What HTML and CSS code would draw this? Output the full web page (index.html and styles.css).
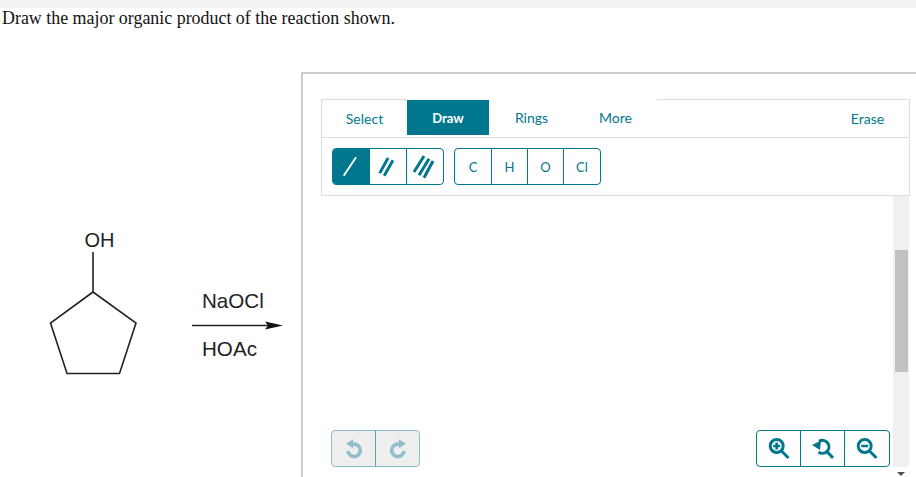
FILE: index.html
```html
<!DOCTYPE html>
<html lang="en">
<head>
    <meta charset="UTF-8">
    <title>Draw the major organic product</title>
    <link rel="stylesheet" href="styles.css">
</head>
<body>
    <div class="top-strip"></div>
    <p class="question">Draw the major organic product of the reaction shown.</p>

    <div class="stage">
        <!-- viewBox starts at the stage top so the numbers read as page coordinates -->
        <svg class="reaction" viewBox="0 72 301 405" width="301" height="405">
            <text class="chem-label" x="84.5" y="247">OH</text>
            <path class="bond" d="M93 252V292L136 323 119.5 373.5H67L50.5 323 93 292"/>
            <path class="bond" d="M192 325.5H268"/>
            <path class="arrow-head" d="M265 321.5L283 325.5 265 329.5 268 325.5z"/>
            <text class="chem-label reagent" x="202" y="308">NaOCl</text>
            <text class="chem-label reagent" x="202" y="356">HOAc</text>
        </svg>

        <div class="frame">
            <div class="editor">
                <div class="tabs">
                    <button class="tab tab-select">Select</button>
                    <button class="tab tab-draw active">Draw</button>
                    <button class="tab tab-rings">Rings</button>
                    <button class="tab tab-more">More</button>
                    <div class="tab-spacer"><button class="tab tab-erase">Erase</button></div>
                </div>

                <div class="tool-row">
                    <div class="btn-group">
                        <button class="tool active">
                            <svg viewBox="0 0 37 35" width="37" height="35"><path class="bond-white" d="M11 27L23.7 8"/></svg>
                        </button>
                        <button class="tool">
                            <svg viewBox="0 0 37 35" width="37" height="35"><path class="bond-teal" d="M10 24.3L18.6 8.7M14.6 27L23.6 11"/></svg>
                        </button>
                        <button class="tool">
                            <svg viewBox="0 0 36 35" width="36" height="35"><path class="bond-teal" d="M7 23L17 7M12 26.3L22 9.7M17 28.7L26 12"/></svg>
                        </button>
                    </div>
                    <div class="btn-group atoms">
                        <button class="tool">C</button>
                        <button class="tool">H</button>
                        <button class="tool">O</button>
                        <button class="tool">Cl</button>
                    </div>
                </div>
            </div>

            <div class="canvas">
                <div class="canvas-controls">
                    <div class="btn-group history">
                        <button class="tool wide">
                            <svg viewBox="0 0 18 20" width="18" height="20"><path class="history-ring" d="M7 5.5A6.2 6.2 0 1 1 3 12"/><path class="history-head" d="M1 4.5L8 0.5V9.5z"/></svg>
                        </button>
                        <button class="tool wide">
                            <svg class="flip" viewBox="0 0 18 20" width="18" height="20"><path class="history-ring" d="M7 5.5A6.2 6.2 0 1 1 3 12"/><path class="history-head" d="M1 4.5L8 0.5V9.5z"/></svg>
                        </button>
                    </div>
                    <div class="btn-group">
                        <button class="tool wide">
                            <svg viewBox="0 0 22 22" width="22" height="22"><circle class="lens" cx="8.7" cy="8" r="6.5"/><path class="lens" d="M13.5 13L20.5 20"/><path class="lens-thin" d="M8.7 4.5v7M5.2 8h7"/></svg>
                        </button>
                        <button class="tool wide">
                            <svg viewBox="0 0 22 22" width="22" height="22"><path class="lens" d="M7 3.3A6.5 6.5 0 1 1 6.5 14"/><path class="lens" d="M15 13.5L21 20"/><path class="lens-head" d="M0 7L9 2.5 8 12z"/></svg>
                        </button>
                        <button class="tool wide">
                            <svg viewBox="0 0 22 22" width="22" height="22"><circle class="lens" cx="8.7" cy="8" r="6.5"/><path class="lens" d="M13.5 13L20.5 20"/><path class="lens-thin" d="M5.2 8h7"/></svg>
                        </button>
                    </div>
                </div>
                <div class="scrollbar">
                    <div class="scroll-thumb"></div>
                    <div class="scroll-arrow"></div>
                </div>
            </div>
        </div>
    </div>
</body>
</html>
```

FILE: styles.css
```css
/* Base Styles */
body {
    margin: 0;
    height: 477px;
    overflow: hidden;
    background: #fff;
    font-family: 'Lato', 'Noto Sans', sans-serif;
}

button {
    padding: 0;
    border: none;
    background: none;
    font: inherit;
    color: inherit;
}

.top-strip {
    height: 8px;
    background: #f2f2f2;
}

.question {
    margin: 0;
    height: 64px;
    padding-left: 2px;
    font-family: 'Liberation Serif', serif;
    font-size: 17.92px;
    line-height: 21px;
    color: #111;
}

/* Reaction drawing */
.stage {
    display: flex;
    height: 405px;
}

.reaction {
    flex: none;
    display: block;
}

.chem-label {
    font-family: 'Liberation Sans', sans-serif;
    font-size: 20px;
    fill: #222;
}

.reagent {
    font-size: 20.6px;
}

.bond {
    fill: none;
    stroke: #222;
    stroke-width: 1.6;
}

.arrow-head {
    fill: #111;
}

/* Editor frame */
.frame {
    flex: 1;
    border-top: 2px solid #ccc;
    border-left: 2px solid #ccc;
    padding: 25px 0 0 18px;
    color: #00788f;
}

.editor {
    width: 587px;
    border: 1px solid #ddd;
    border-top: none;
    font-size: 14px;
}

.tabs {
    display: flex;
    height: 38px;
    border-bottom: 1px solid #ddd;
}

.tab {
    flex: none;
    height: 37px;
}

.tab-select {
    width: 86px;
    border-top: 1px solid #ddd;
    margin-left: -1px;
    border-left: 1px solid #ddd;
    border-top-left-radius: 4px;
}

.tab-draw {
    width: 82px;
    height: 35px;
    margin-top: 1px;
}

.tab-rings { width: 85px; }
.tab-more { width: 83px; }

.tab.active {
    background: #00778d;
    color: #fff;
    font-weight: 700;
    font-size: 13px;
}

.tab-spacer {
    flex: 1;
    display: flex;
    justify-content: flex-end;
    border-top: 1px solid #ddd;
    margin-right: -1px;
    border-right: 1px solid #ddd;
}

.tab-erase {
    width: 68px;
    height: 36px;
    padding-right: 15px;
}

.tool-row {
    display: flex;
    gap: 10px;
    padding: 10px 0 10px 10px;
    height: 37px;
}

.btn-group {
    display: flex;
    border: 1px solid #00778d;
    border-radius: 4px;
    overflow: hidden;
}

.tool {
    display: flex;
    align-items: center;
    justify-content: center;
    flex: none;
    width: 37px;
    height: 35px;
    border-right: 1px solid #00778d;
}

.tool:last-child {
    border-right: none;
    width: 36px;
}

.atoms .tool {
    width: 36px;
    font-size: 13px;
}

.atoms .tool:first-child {
    width: 37px;
}

.tool.active {
    background: #00778d;
}

.tool.wide {
    width: 44px;
}

.bond-white {
    stroke: #fff;
    stroke-width: 2;
}

.bond-teal {
    stroke: #00778d;
    stroke-width: 3;
}

/* Canvas */
.canvas {
    display: flex;
    width: 588px;
}

.canvas-controls {
    flex: 1;
    display: flex;
    justify-content: space-between;
    align-items: flex-start;
    padding: 234px 3px 0 10px;
}

.history {
    background: #eee;
    border-color: #8fbcc8;
}

.history .tool {
    border-right-color: #5aa5b8;
}

.history .tool:last-child {
    width: 43px;
}

.history-ring {
    fill: none;
    stroke: #93bfcc;
    stroke-width: 3.6;
}

.history-head {
    fill: #93bfcc;
}

.flip {
    transform: scaleX(-1);
}

.lens {
    fill: none;
    stroke: #00778d;
    stroke-width: 3;
}

.lens-thin {
    fill: none;
    stroke: #00778d;
    stroke-width: 2.6;
}

.lens-head {
    fill: #00778d;
}

.scrollbar {
    flex: none;
    position: relative;
    width: 16px;
    background: #f0f0f0;
}

.scroll-thumb {
    width: 13px;
    height: 122px;
    margin: 54px 0 0 2px;
    background: #c1c1c1;
}

.scroll-arrow {
    position: absolute;
    left: 4px;
    top: 276px;
    border: 4px solid transparent;
    border-top: 4px solid #505050;
}
```
